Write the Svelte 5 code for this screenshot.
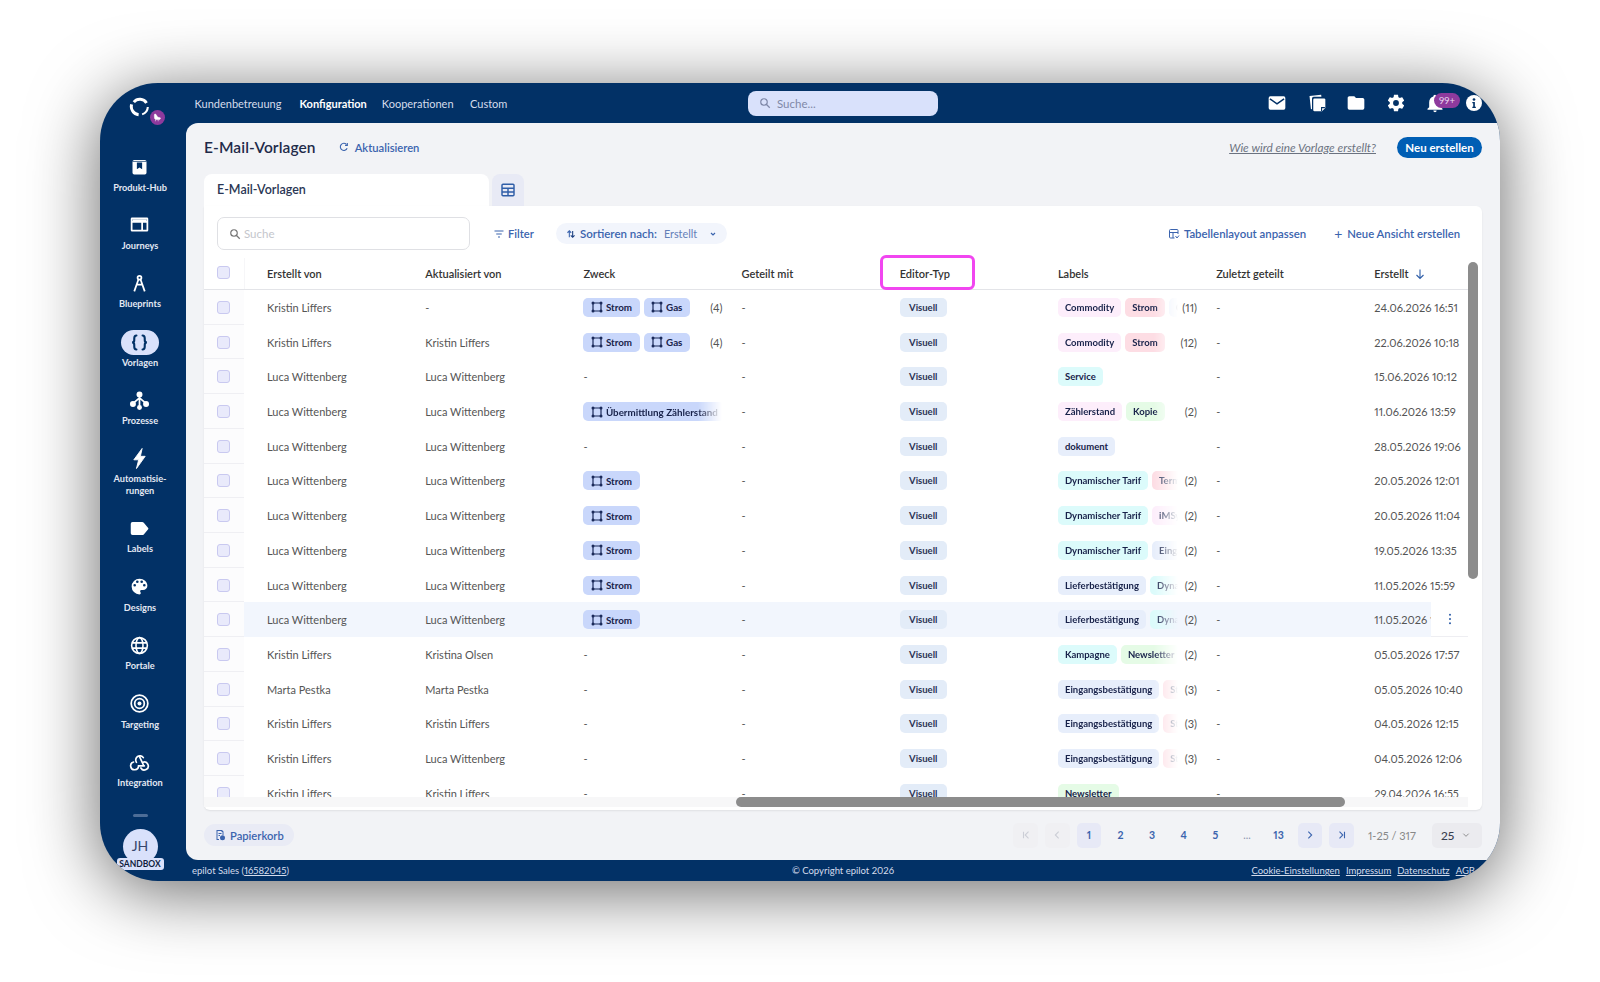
<script>
  const nav = [
    { label: 'Produkt-Hub', icon: 'hub' },
    { label: 'Journeys', icon: 'journeys' },
    { label: 'Blueprints', icon: 'blueprints' },
    { label: 'Vorlagen', icon: 'braces', active: true },
    { label: 'Prozesse', icon: 'flows' },
    { label: 'Automatisie-\nrungen', icon: 'bolt' },
    { label: 'Labels', icon: 'label' },
    { label: 'Designs', icon: 'palette' },
    { label: 'Portale', icon: 'globe' },
    { label: 'Targeting', icon: 'target' },
    { label: 'Integration', icon: 'webhook' },
  ];

  const KL = 'Kristin Liffers';
  const LW = 'Luca Wittenberg';
  const dyn = { t: 'Dynamischer Tarif', c: 'cyan' };
  const lief = { t: 'Lieferbestätigung', c: 'blue' };
  const eing = { t: 'Eingangsbestätigung', c: 'blue' };
  const strom = ['Strom'];

  const rows = [
    { by: KL, up: '-', purpose: ['Strom', 'Gas'], pc: '(4)', labels: [{ t: 'Commodity', c: 'pink' }, { t: 'Strom', c: 'red' }, { t: 'Commodity', c: 'blue' }], lc: '(11)', date: '24.06.2026 16:51' },
    { by: KL, up: KL, purpose: ['Strom', 'Gas'], pc: '(4)', labels: [{ t: 'Commodity', c: 'pink' }, { t: 'Strom', c: 'red' }], lc: '(12)', date: '22.06.2026 10:18' },
    { by: LW, up: LW, labels: [{ t: 'Service', c: 'cyan' }], date: '15.06.2026 10:12' },
    { by: LW, up: LW, purpose: ['Übermittlung Zählerstand'], fade: true, labels: [{ t: 'Zählerstand', c: 'pink' }, { t: 'Kopie', c: 'green' }], lc: '(2)', date: '11.06.2026 13:59' },
    { by: LW, up: LW, labels: [{ t: 'dokument', c: 'blue' }], date: '28.05.2026 19:06' },
    { by: LW, up: LW, purpose: strom, labels: [dyn, { t: 'Termin', c: 'red' }], lc: '(2)', date: '20.05.2026 12:01' },
    { by: LW, up: LW, purpose: strom, labels: [dyn, { t: 'iMSys', c: 'pink' }], lc: '(2)', date: '20.05.2026 11:04' },
    { by: LW, up: LW, purpose: strom, labels: [dyn, { t: 'Eingang', c: 'blue' }], lc: '(2)', date: '19.05.2026 13:35' },
    { by: LW, up: LW, purpose: strom, labels: [lief, { t: 'Dynamisch', c: 'cyan' }], lc: '(2)', date: '11.05.2026 15:59' },
    { by: LW, up: LW, purpose: strom, labels: [lief, { t: 'Dynamisch', c: 'cyan' }], lc: '(2)', date: '11.05.2026 15:59', hover: true },
    { by: KL, up: 'Kristina Olsen', labels: [{ t: 'Kampagne', c: 'cyan' }, { t: 'Newsletter', c: 'green' }], lc: '(2)', date: '05.05.2026 17:57' },
    { by: 'Marta Pestka', up: 'Marta Pestka', labels: [eing, { t: 'Strom', c: 'red' }], lc: '(3)', date: '05.05.2026 10:40' },
    { by: KL, up: KL, labels: [eing, { t: 'Strom', c: 'red' }], lc: '(3)', date: '04.05.2026 12:15' },
    { by: KL, up: LW, labels: [eing, { t: 'Strom', c: 'red' }], lc: '(3)', date: '04.05.2026 12:06' },
    { by: KL, up: KL, labels: [{ t: 'Newsletter', c: 'green' }], date: '29.04.2026 16:55' },
  ];

  const pages = ['1', '2', '3', '4', '5', '...', '13'];
</script>

{#snippet searchIcon()}
  <svg class="i12" viewBox="0 0 24 24" fill="none" stroke="currentColor" stroke-width="2.4"><circle cx="10" cy="10" r="6.5" /><path d="M15 15l6.5 6.5" /></svg>
{/snippet}

{#snippet sideIcon(name)}
  <svg class="side-icon" viewBox="0 0 24 24" fill="#fff">
    {#if name === 'hub'}
      <path d="M6 4.5h12a2 2 0 0 1 2 2V19a2 2 0 0 1-2 2H6a2 2 0 0 1-2-2V6.500a2 2 0 0 1 2-2z" />
      <path d="M9 7.500h6v7.500l-3-2-3 2z" fill="#023166" />
      <path d="M4 6.200h16" stroke="#023166" stroke-width=".8" />
    {:else if name === 'journeys'}
      <path fill-rule="evenodd" d="M3.500 4h17A1.500 1.500 0 0 1 22 5.500v13a1.500 1.500 0 0 1-1.500 1.500h-17A1.500 1.500 0 0 1 2 18.500v-13A1.500 1.500 0 0 1 3.500 4zM4 10v8h10v-8zm12 0v8h4v-8zM4 6v2h16V6z" />
      <path d="M4 6h16v2H4z" />
    {:else if name === 'blueprints'}
      <g fill="none" stroke="#fff" stroke-width="2"><circle cx="12" cy="5.500" r="2.200" /><path d="M10.800 7.500L6 21M13.200 7.500L18 21M8.500 12.500c2 1 5 1 7 0" /></g>
    {:else if name === 'braces'}
      <g fill="none" stroke="#023166" stroke-width="2.400" stroke-linecap="round"><path d="M8.500 4C6 4 6 5.500 6 7.500v2C6 11 5 12 3.500 12 5 12 6 13 6 14.500v2C6 18.500 6 20 8.500 20" /><path d="M15.500 4C18 4 18 5.500 18 7.500v2c0 1.500 1 2.500 2.500 2.500-1.500 0-2.500 1-2.500 2.500v2c0 2 0 3.500-2.500 3.500" /></g>
    {:else if name === 'flows'}
      <circle cx="12" cy="5" r="3.400" /><circle cx="4.500" cy="16" r="3.400" /><circle cx="19.500" cy="16" r="3.400" /><circle cx="12" cy="20" r="2.800" />
      <path d="M12 6v12M12 9L5 15M12 9l7 6" stroke="#fff" stroke-width="2" fill="none" />
    {:else if name === 'bolt'}
      <path d="M15 .5L5.500 13.500H11L8.500 23.500 18.500 9.500H13L15 .5z" stroke="#fff" stroke-linejoin="round" />
    {:else if name === 'label'}
      <path d="M4 4.500h11c.8 0 1.400.3 1.900.9l5 6c.4.4.4 1 0 1.400l-5 6c-.5.6-1.100.7-1.900.7H4a2 2 0 0 1-2-2v-11a2 2 0 0 1 2-2z" />
    {:else if name === 'palette'}
      <path d="M17.500,12A1.500,1.500 0 0,1 16,10.500A1.500,1.500 0 0,1 17.500,9A1.500,1.500 0 0,1 19,10.500A1.500,1.500 0 0,1 17.500,12M14.500,8A1.500,1.500 0 0,1 13,6.500A1.500,1.500 0 0,1 14.500,5A1.500,1.500 0 0,1 16,6.500A1.500,1.500 0 0,1 14.500,8M9.500,8A1.500,1.500 0 0,1 8,6.500A1.500,1.500 0 0,1 9.500,5A1.500,1.500 0 0,1 11,6.500A1.500,1.500 0 0,1 9.500,8M6.500,12A1.500,1.500 0 0,1 5,10.500A1.500,1.500 0 0,1 6.500,9A1.500,1.500 0 0,1 8,10.500A1.500,1.500 0 0,1 6.500,12M12,3A9,9 0 0,0 3,12A9,9 0 0,0 12,21A1.500,1.500 0 0,0 13.500,19.500C13.500,19.110 13.350,18.760 13.110,18.500C12.880,18.230 12.730,17.880 12.730,17.500A1.500,1.500 0 0,1 14.230,16H16A5,5 0 0,0 21,11C21,6.580 16.970,3 12,3Z" />
    {:else if name === 'globe'}
      <g fill="none" stroke="#fff" stroke-width="1.800"><circle cx="12" cy="12" r="9" /><ellipse cx="12" cy="12" rx="4" ry="9" /><path d="M3.500 9h17M3.500 15h17" /></g>
    {:else if name === 'target'}
      <g fill="none" stroke="#fff" stroke-width="2"><circle cx="12" cy="12" r="9.500" /><circle cx="12" cy="12" r="5.500" /></g><circle cx="12" cy="12" r="2.300" />
    {:else if name === 'webhook'}
      <g fill="none" stroke="#fff" stroke-width="1.900" stroke-linecap="round"><path d="M8.500 13A4.600 4.600 0 1 1 16.400 7.600" /><path d="M12 6.500L16.500 16" /><path d="M5.200 12.600A4.500 4.500 0 1 0 10.900 17H17.500" /><path d="M13.600 19.400A4.500 4.500 0 1 0 15.900 12.900" /></g>
    {/if}
  </svg>
{/snippet}

{#snippet purposeIcon()}
  <svg class="purpose-icon" viewBox="0 0 12 12" fill="#1b2a5a"><path d="M2 2h8v8H2z" fill="none" stroke="#1b2a5a" stroke-width="1.200" /><circle cx="2" cy="2" r="1.500" /><circle cx="10" cy="2" r="1.500" /><circle cx="2" cy="10" r="1.500" /><circle cx="10" cy="10" r="1.500" /></svg>
{/snippet}

<div class="page">
  <div class="window">
    <div class="logo">
      <svg class="logo-mark" viewBox="0 0 24 24" fill="none" stroke="#fff" stroke-width="3.400"><path d="M5.500 7A9 9 0 0 1 20 8" /><path d="M21.500 12.500A9.500 9.500 0 0 1 15 21" stroke-width="2.400" /><path d="M11 21.500A9.500 9.500 0 0 1 3 9.500" /></svg>
      <span class="logo-badge">
        <svg viewBox="0 0 16 16" fill="#fff"><path d="M4 3c1.500 0 2.500 1 3 2.500.5 1.500 2 2.500 5 3 .5 0 .5 2-1 2.500H6C4.500 11 3.500 9.500 3.500 7.500 3.500 6 3 4.500 4 3zM5 11.500v2M9 11.500v2" stroke="#fff" stroke-width=".8" /></svg>
      </span>
    </div>

    <header class="topbar">
      <nav class="topnav">
        <span>Kundenbetreuung</span>
        <span class="current">Konfiguration</span>
        <span>Kooperationen</span>
        <span>Custom</span>
      </nav>
      <div class="global-search">{@render searchIcon()}<span>Suche...</span></div>
      <div class="top-icons">
        <svg viewBox="0 0 24 24" class="top-icon mail"><rect x="2" y="4" width="20" height="16" rx="2" fill="#fff" /><path d="M3.500 7l8.500 6 8.500-6" fill="none" stroke="#023166" stroke-width="1.800" /></svg>
        <svg viewBox="0 0 24 24" class="top-icon"><path d="M3 3.500L17 2l.3 2.500H8a2 2 0 0 0-2 2v13l-1.300-.2z" fill="#fff" /><path d="M9 6.500h11.500A1.500 1.500 0 0 1 22 8v10l-4 4H9a1.500 1.500 0 0 1-1.500-1.500V8A1.500 1.500 0 0 1 9 6.500z" fill="#fff" /><path d="M17.500 21.500v-4h4" fill="none" stroke="#023166" stroke-width="1.300" /></svg>
        <svg viewBox="0 0 24 24" class="top-icon" fill="#fff"><path d="M10,4H4C2.890,4 2,4.890 2,6V18A2,2 0 0,0 4,20H20A2,2 0 0,0 22,18V8C22,6.890 21.100,6 20,6H12L10,4Z" /></svg>
        <svg viewBox="0 0 24 24" class="top-icon" fill="#fff"><path d="M12,15.500A3.500,3.500 0 0,1 8.500,12A3.500,3.500 0 0,1 12,8.500A3.500,3.500 0 0,1 15.500,12A3.500,3.500 0 0,1 12,15.500M19.430,12.970C19.470,12.650 19.500,12.330 19.500,12C19.500,11.670 19.470,11.340 19.430,11L21.540,9.370C21.730,9.220 21.780,8.950 21.660,8.730L19.660,5.270C19.540,5.050 19.270,4.960 19.050,5.050L16.560,6.050C16.040,5.660 15.500,5.320 14.870,5.070L14.500,2.420C14.460,2.180 14.250,2 14,2H10C9.750,2 9.540,2.180 9.500,2.420L9.130,5.070C8.500,5.320 7.960,5.660 7.440,6.050L4.950,5.050C4.730,4.960 4.460,5.050 4.340,5.270L2.340,8.730C2.210,8.950 2.270,9.220 2.460,9.370L4.570,11C4.530,11.340 4.500,11.670 4.500,12C4.500,12.330 4.530,12.650 4.570,12.970L2.460,14.630C2.270,14.780 2.210,15.050 2.340,15.270L4.340,18.730C4.460,18.950 4.730,19.030 4.950,18.950L7.440,17.940C7.960,18.340 8.500,18.680 9.130,18.930L9.500,21.580C9.540,21.820 9.750,22 10,22H14C14.250,22 14.460,21.820 14.500,21.580L14.870,18.930C15.500,18.670 16.040,18.340 16.560,17.940L19.050,18.950C19.270,19.030 19.540,18.950 19.660,18.730L21.660,15.270C21.780,15.050 21.730,14.780 21.540,14.630L19.430,12.970Z" /></svg>
        <span class="bell">
          <svg viewBox="0 0 24 24" class="top-icon" fill="#fff"><path d="M21,19V20H3V19L5,17V11C5,7.900 7.030,5.170 10,4.290C10,4.190 10,4.100 10,4A2,2 0 0,1 12,2A2,2 0 0,1 14,4C14,4.100 14,4.190 14,4.290C16.970,5.170 19,7.900 19,11V17L21,19M14,21A2,2 0 0,1 12,23A2,2 0 0,1 10,21" /></svg>
          <span class="bell-count">99+</span>
        </span>
        <svg viewBox="0 0 24 24" class="info"><circle cx="12" cy="12" r="12" fill="#fff" /><circle cx="12" cy="6.800" r="2" fill="#023166" /><path d="M9.500 10.500h3.800v7h1.500v2H9.500v-2h1.300v-5H9.500z" fill="#023166" /></svg>
      </div>
    </header>

    <aside class="sidebar">
      <div class="side-items">
        {#each nav as item}
          <div class="side-item">
            <span class="side-glyph" class:active={item.active}>{@render sideIcon(item.icon)}</span>
            <span class="side-label">{item.label}</span>
          </div>
        {/each}
      </div>
      <div class="side-foot">
        <span class="side-rule"></span>
        <div class="avatar">JH<span class="sandbox">SANDBOX</span></div>
      </div>
    </aside>

    <main class="main">
      <div class="page-head">
        <h1>E-Mail-Vorlagen</h1>
        <span class="link refresh">
          <svg class="i10" viewBox="0 0 24 24" fill="none" stroke="currentColor" stroke-width="2.600"><path d="M19.500 15a8.500 8.500 0 1 1-1.500-9" /><path d="M20 2.500V8h-5.500" /></svg>
          Aktualisieren
        </span>
        <a class="help" href="#help">Wie wird eine Vorlage erstellt?</a>
        <button class="primary">Neu erstellen</button>
      </div>

      <div class="tabs">
        <div class="tab">E-Mail-Vorlagen</div>
        <div class="tab-grid">
          <svg viewBox="0 0 24 24" fill="none" stroke="#2f5ea8" stroke-width="2.200"><rect x="3" y="3.500" width="18" height="17" rx="1.500" /><path d="M3 9.500h18M3 15h18M12 9.500v11" /></svg>
        </div>
      </div>

      <section class="card">
        <div class="toolbar">
          <div class="search">{@render searchIcon()}<span>Suche</span></div>
          <span class="link filter">
            <svg class="i12" viewBox="0 0 24 24" fill="none" stroke="currentColor" stroke-width="2.200"><path d="M3 6h18M6.500 12h11M10 18h4" /></svg>
            Filter
          </span>
          <div class="sort">
            <svg class="i10" viewBox="0 0 24 24" fill="none" stroke="currentColor" stroke-width="2.600"><path d="M8 20V5M3.500 9L8 4.500 12.500 9" /><path d="M16 5v15M11.500 15.500L16 20l4.500-4.500" stroke="#1b3f80" /></svg>
            <span class="sort-key">Sortieren nach:</span>
            <span class="sort-value">Erstellt</span>
            <svg class="i8" viewBox="0 0 12 12" fill="none" stroke="currentColor" stroke-width="1.800"><path d="M3 4.500L6 7.500l3-3" /></svg>
          </div>
          <span class="link layout">
            <svg class="i12" viewBox="0 0 24 24" fill="none" stroke="currentColor" stroke-width="2"><path d="M13 20H5a2 2 0 0 1-2-2V5a2 2 0 0 1 2-2h13a2 2 0 0 1 2 2v7M3 9h17M10 9v11" /><path d="M15 16l3 4 4-5" /></svg>
            Tabellenlayout anpassen
          </span>
          <span class="link new-view"><span class="plus">+</span> Neue Ansicht erstellen</span>
        </div>

        <div class="table">
          <div class="grid head">
            <div class="check"><span class="box"></span></div>
            <div class="cell first">Erstellt von</div>
            <div class="cell">Aktualisiert von</div>
            <div class="cell">Zweck</div>
            <div class="cell">Geteilt mit</div>
            <div class="cell editor">Editor-Typ<span class="highlight"></span></div>
            <div class="cell">Labels</div>
            <div class="cell">Zuletzt geteilt</div>
            <div class="cell">
              Erstellt
              <svg class="i12" viewBox="0 0 24 24" fill="none" stroke="#2f5ea8" stroke-width="2.200"><path d="M12 3v18M5 14l7 7 7-7" /></svg>
            </div>
          </div>

          <div class="body">
            {#each rows as row}
              <div class="grid row" class:hover={row.hover}>
                <div class="check"><span class="box"></span></div>
                <div class="cell first">{row.by}</div>
                <div class="cell">{row.up}</div>
                <div class="cell tags-cell">
                  {#if row.purpose}
                    <div class="tags" class:fade={row.fade}>
                      {#each row.purpose as p}
                        <span class="tag purpose">{@render purposeIcon()}{p}</span>
                      {/each}
                    </div>
                    {#if row.pc}<span class="count">{row.pc}</span>{/if}
                  {:else}-{/if}
                </div>
                <div class="cell">-</div>
                <div class="cell"><span class="tag editor-tag">Visuell</span></div>
                <div class="cell tags-cell">
                  <div class="tags" class:fade={row.lc}>
                    {#each row.labels as l}
                      <span class="tag {l.c}">{l.t}</span>
                    {/each}
                  </div>
                  {#if row.lc}<span class="count">{row.lc}</span>{/if}
                </div>
                <div class="cell">-</div>
                <div class="cell">{row.date}</div>
                {#if row.hover}
                  <div class="actions"><svg viewBox="0 0 4 14" fill="#2f5ea8"><circle cx="2" cy="2" r="1.200" /><circle cx="2" cy="7" r="1.200" /><circle cx="2" cy="12" r="1.200" /></svg></div>
                {/if}
              </div>
            {/each}
          </div>

          <div class="hbar"><span class="hthumb"></span></div>
          <span class="vthumb"></span>
        </div>
      </section>

      <div class="pager-row">
        <span class="trash">
          <svg class="i12" viewBox="0 0 24 24" fill="#3b64ae"><path d="M5 2h11l3 3v7h-2V6h-2V4H7v16h3v2H5z" /><path d="M9 8h6v2H9zM9 12h3v2H9z" /><circle cx="17" cy="17.500" r="5" /></svg>
          Papierkorb
        </span>
        <div class="pager">
          <span class="pg off"><svg class="i10" viewBox="0 0 12 12" fill="none" stroke="currentColor" stroke-width="1.300"><path d="M3 2v8M9 2L5 6l4 4" /></svg></span>
          <span class="pg off"><svg class="i10" viewBox="0 0 12 12" fill="none" stroke="currentColor" stroke-width="1.300"><path d="M8 2L4 6l4 4" /></svg></span>
          {#each pages as p, i}
            <span class="pg" class:cur={i === 0} class:dots={p === '...'}>{p}</span>
          {/each}
          <span class="pg cur"><svg class="i10" viewBox="0 0 12 12" fill="none" stroke="currentColor" stroke-width="1.300"><path d="M4 2l4 4-4 4" /></svg></span>
          <span class="pg cur"><svg class="i10" viewBox="0 0 12 12" fill="none" stroke="currentColor" stroke-width="1.300"><path d="M3 2l4 4-4 4M9 2v8" /></svg></span>
          <span class="range">1-25 / 317</span>
          <span class="size">25 <svg class="i8" viewBox="0 0 12 12" fill="none" stroke="#777" stroke-width="1.200"><path d="M2 4l4 4 4-4" /></svg></span>
        </div>
      </div>
    </main>

    <footer class="foot">
      <span class="account">epilot Sales (<u>16582045</u>)</span>
      <span>© Copyright epilot 2026</span>
      <span class="foot-links"><u>Cookie-Einstellungen</u><u>Impressum</u><u>Datenschutz</u><u>AGB</u></span>
    </footer>
  </div>
</div>

<style>
  :global(body) {
    margin: 0;
    background: #fff;
    font-family: "Lato", "Open Sans", sans-serif;
    font-variant-numeric: proportional-nums;
  }

  .page {
    width: 1600px;
    height: 982px;
    padding: 83px 100px 101px;
    box-sizing: border-box;
    overflow: hidden;
    background: #fff;
  }

  .window {
    height: 798px;
    display: grid;
    grid-template-columns: 86px 1fr;
    grid-template-rows: 40px 737px 21px;
    grid-template-areas:
      "logo top"
      "side main"
      "side foot";
    background: #023166;
    border-radius: 58px;
    box-shadow: 0 10px 70px rgba(0, 0, 0, 0.6);
    overflow: hidden;
  }

  svg {
    display: block;
    flex: none;
  }

  .i8 { width: 8px; height: 8px; }
  .i10 { width: 10px; height: 10px; }
  .i12 { width: 12px; height: 12px; }

  /* top bar */
  .logo {
    grid-area: logo;
    position: relative;
  }

  .logo-mark {
    position: absolute;
    left: 29px;
    top: 13px;
    width: 21px;
    height: 21px;
  }

  .logo-badge {
    position: absolute;
    left: 50px;
    top: 27px;
    width: 15px;
    height: 15px;
    padding: 2px;
    box-sizing: border-box;
    border-radius: 50%;
    background: #8e3a9d;
  }

  .topbar {
    grid-area: top;
    display: flex;
    align-items: center;
    padding-left: 8.500px;
    color: #d5dcec;
    font-size: 11px;
  }

  .topnav {
    display: flex;
    gap: 16.500px;
    width: 553.500px;
  }

  .current {
    margin: 0 -1.500px 0 1.500px;
    color: #fff;
    font-weight: 700;
  }

  .global-search {
    display: flex;
    align-items: center;
    gap: 6px;
    width: 190px;
    height: 25px;
    padding-left: 11px;
    box-sizing: border-box;
    border-radius: 8px;
    background: #d9e1fb;
    color: #7f88a8;
    font-size: 11.5px;
  }

  .top-icons {
    display: flex;
    align-items: center;
    margin-left: auto;
    margin-right: 18px;
    gap: 19.500px;
  }

  .top-icon {
    width: 20px;
    height: 20px;
  }

  .info {
    width: 16px;
    height: 16px;
    margin-left: 1.500px;
  }

  .bell {
    position: relative;
    display: block;
  }

  .bell-count {
    position: absolute;
    left: 9px;
    top: 0;
    width: 26px;
    height: 15px;
    border-radius: 8px;
    background: #8e3a9d;
    color: #e8d5ee;
    font-size: 9.500px;
    line-height: 15px;
    text-align: center;
  }

  /* sidebar */
  .sidebar {
    grid-area: side;
    display: flex;
    flex-direction: column;
    align-items: center;
    padding-right: 6px;
  }

  .side-items {
    display: flex;
    flex-direction: column;
    gap: 19.900px;
    padding-top: 31.500px;
  }

  .side-item {
    display: flex;
    flex-direction: column;
    align-items: center;
    gap: 3px;
  }

  .side-glyph {
    display: flex;
    align-items: center;
    justify-content: center;
    height: 24px;
    width: 38px;
    border-radius: 13px;
  }

  .side-glyph.active {
    height: 25px;
    margin-bottom: -1px;
    background: #d9e1fb;
  }

  .side-icon {
    width: 21px;
    height: 21px;
  }

  .side-label {
    color: #e3e8f3;
    font-size: 9.200px;
    font-weight: 700;
    line-height: 11.500px;
    text-align: center;
    white-space: pre-line;
  }

  .side-foot {
    margin-top: auto;
    display: flex;
    flex-direction: column;
    align-items: center;
    padding-bottom: 17px;
  }

  .side-rule {
    width: 15px;
    height: 3px;
    margin-bottom: 12px;
    border-radius: 2px;
    background: #4d6d97;
  }

  .avatar {
    position: relative;
    width: 35px;
    height: 35px;
    border-radius: 50%;
    background: #d9e1fb;
    color: #37466b;
    font-size: 14px;
    line-height: 33px;
    text-align: center;
  }

  .sandbox {
    position: absolute;
    left: -6px;
    top: 29px;
    width: 47px;
    height: 12px;
    border-radius: 3px;
    background: #d9e1fb;
    color: #101c3c;
    font-size: 8.500px;
    font-weight: 700;
    line-height: 12px;
  }

  /* main column */
  .main {
    grid-area: main;
    display: flex;
    flex-direction: column;
    padding: 0 18px;
    background: #f2f3f6;
    border-radius: 12px 0 0 12px;
    color: #444;
  }

  .page-head {
    display: flex;
    align-items: center;
    height: 51px;
    flex: none;
    box-sizing: border-box;
    padding-bottom: 3px;
  }

  h1 {
    margin: 0 23px 0 0;
    color: #1f2b4a;
    font-size: 15.500px;
    font-weight: 600;
    letter-spacing: 0.1px;
  }

  .link {
    display: inline-flex;
    align-items: center;
    gap: 4px;
    color: #3b64ae;
    font-size: 11.200px;
    font-weight: 600;
    white-space: nowrap;
  }

  .refresh {
    gap: 6px;
  }

  .help {
    margin-left: auto;
    margin-right: 21px;
    color: #6b7280;
    font-size: 11.800px;
    font-style: italic;
  }

  .primary {
    width: 85px;
    height: 21px;
    padding: 0;
    border: 0;
    border-radius: 11px;
    background: #005eb4;
    color: #fff;
    font: 700 11.500px "Lato", sans-serif;
  }

  .tabs {
    display: flex;
    gap: 3px;
    height: 32px;
    flex: none;
  }

  .tab {
    width: 285px;
    padding-left: 13px;
    box-sizing: border-box;
    border-radius: 8px 8px 0 0;
    background: #fff;
    color: #2a3654;
    font-size: 12.500px;
    font-weight: 600;
    line-height: 31px;
  }

  .tab-grid {
    display: flex;
    align-items: center;
    justify-content: center;
    width: 32px;
    border-radius: 8px 8px 0 0;
    background: #e8eaf5;
  }

  .tab-grid svg {
    width: 16px;
    height: 16px;
  }

  .card {
    display: flex;
    flex-direction: column;
    height: 604px;
    flex: none;
    background: #fff;
    border-radius: 0 6px 6px 6px;
    box-shadow: 0 1px 2px rgba(0, 0, 0, 0.08);
  }

  .toolbar {
    display: flex;
    align-items: center;
    height: 44px;
    padding: 11px 22px 0 13px;
    box-sizing: border-box;
    flex: none;
  }

  .search {
    display: flex;
    align-items: center;
    gap: 3px;
    width: 253px;
    height: 33px;
    padding-left: 11px;
    box-sizing: border-box;
    border: 1px solid #dfe0e4;
    border-radius: 7px;
    color: #777;
  }

  .search span {
    color: #c4c6cc;
    font-size: 11.500px;
  }

  .filter {
    margin-left: 23px;
    gap: 3px;
  }

  .sort {
    display: flex;
    align-items: center;
    width: 171px;
    height: 21px;
    margin-left: 22px;
    padding-left: 10px;
    box-sizing: border-box;
    border-radius: 11px;
    background: #f2f5fc;
    color: #3b64ae;
    font-size: 11.500px;
    font-weight: 600;
  }

  .sort-key { margin-left: 4px; }
  .sort-value { margin-left: 7px; color: #6480b8; font-size: 10.800px; font-weight: 400; }
  .sort-value + svg { margin-left: 12px; }

  .layout {
    margin-left: auto;
    font-size: 11.400px;
  }

  .new-view {
    margin-left: 28px;
    gap: 5px;
    font-size: 11.300px;
  }

  .plus {
    font-size: 14px;
    line-height: 10px;
    font-weight: 400;
  }

  /* table */
  .table {
    position: relative;
    display: flex;
    flex-direction: column;
    min-height: 0;
    flex: 1;
    font-size: 11px;
    color: #555;
  }

  .grid {
    display: grid;
    grid-template-columns: 40px 165.200px repeat(6, 158.200px) 1fr;
    width: 1264px;
    box-sizing: border-box;
  }

  .head {
    height: 40px;
    padding-top: 8px;
    flex: none;
    border-bottom: 1.500px solid #e3e4e8;
    color: #333;
    font-weight: 600;
  }

  .head .check {
    border-bottom: 0;
    background: none;
    box-shadow: 1px 0 0 #f6f6f8;
    padding-bottom: 3px;
  }

  .body {
    height: 507px;
    flex: none;
    overflow: hidden;
  }

  .row {
    position: relative;
    height: 34.720px;
  }

  .check {
    display: flex;
    align-items: center;
    justify-content: center;
    padding: 1px 4px 0 2px;
    background: #fcfcfd;
    border-bottom: 1.500px solid #efeff3;
    box-sizing: border-box;
  }

  .box {
    width: 13px;
    height: 13px;
    box-sizing: border-box;
    border: 1px solid #c9c9f0;
    border-radius: 3px;
    background: #e9eafb;
  }

  .cell {
    display: flex;
    align-items: center;
    padding-left: 16px;
    min-width: 0;
    white-space: nowrap;
    gap: 5px;
  }

  .cell.first {
    padding-left: 23px;
  }

  .hover .cell {
    background: #f2f6fd;
  }

  .editor {
    position: relative;
  }

  .highlight {
    position: absolute;
    left: -4px;
    top: -3px;
    width: 95px;
    height: 35px;
    box-sizing: border-box;
    border: 3.500px solid #f146f0;
    border-radius: 6px;
  }

  .tags-cell {
    gap: 0;
    padding-right: 3.200px;
  }

  .tags {
    display: flex;
    gap: 4px;
    width: 120px;
    flex: none;
    overflow: hidden;
  }

  .tags.fade {
    -webkit-mask-image: linear-gradient(90deg, #000 calc(100% - 24px), transparent);
    mask-image: linear-gradient(90deg, #000 calc(100% - 24px), transparent);
  }

  .tags.fade:has(.purpose) {
    width: 139px;
  }

  .tag {
    display: inline-flex;
    align-items: center;
    flex: none;
    height: 19px;
    padding: 0 7px;
    border-radius: 5px;
    color: #18224a;
    font-size: 9.500px;
    font-weight: 700;
  }

  .purpose {
    gap: 3px;
    padding: 0 7.500px;
    background: #c9d7fb;
    font-size: 9.800px;
  }

  .purpose-icon {
    width: 12px;
    height: 12px;
  }

  .editor-tag {
    width: 47px;
    padding: 0;
    justify-content: center;
    background: #e3ecf8;
    color: #2b3354;
  }

  .pink { background: #fdeefb; }
  .red { background: #fddde4; }
  .cyan { background: #dcfbfb; }
  .blue { background: #e7eefb; }
  .green { background: #e5fbe6; }

  .count {
    margin-left: auto;
    color: #555;
  }

  .actions {
    position: absolute;
    right: 0;
    top: 0;
    width: 37px;
    height: 100%;
    display: flex;
    align-items: center;
    justify-content: center;
    background: #fff;
    border-bottom: 1px solid #eeeef2;
    box-sizing: border-box;
  }

  .actions svg {
    width: 4px;
    height: 12px;
  }

  .hbar {
    position: relative;
    height: 10px;
    width: 1264px;
    flex: none;
    background: #f7f7f8;
  }

  .hthumb {
    position: absolute;
    left: 532px;
    top: 0;
    width: 609px;
    height: 10px;
    border-radius: 5px;
    background: #8c8c8c;
  }

  .vthumb {
    position: absolute;
    right: 4px;
    top: 12px;
    width: 10px;
    height: 317px;
    border-radius: 5px;
    background: #8c8c8c;
  }

  /* pagination */
  .pager-row {
    display: flex;
    align-items: center;
    flex: 1;
  }

  .trash {
    display: inline-flex;
    align-items: center;
    gap: 4px;
    height: 22px;
    padding: 0 10px;
    border-radius: 11px;
    background: #e9ebf5;
    color: #3b64ae;
    font-size: 11.200px;
    font-weight: 600;
  }

  .pager {
    display: flex;
    align-items: center;
    gap: 7px;
    margin-left: auto;
    color: #3b64ae;
    font-size: 10.500px;
    font-weight: 700;
  }

  .pg {
    display: flex;
    align-items: center;
    justify-content: center;
    width: 24.600px;
    height: 25px;
    border-radius: 5px;
  }

  .pg.off {
    background: #f0f0f3;
    color: #ccced6;
  }

  .pg.cur {
    background: #e7e9f6;
  }

  .pg.dots {
    color: #8a93ad;
    font-weight: 400;
  }

  .range {
    width: 50px;
    margin-left: 7px;
    color: #888;
    font-size: 11px;
    font-weight: 400;
    white-space: nowrap;
  }

  .size {
    display: flex;
    align-items: center;
    gap: 8px;
    width: 50px;
    height: 25px;
    margin-left: 7px;
    padding-left: 9px;
    box-sizing: border-box;
    border-radius: 5px;
    background: #ebebef;
    color: #3a3f50;
    font-size: 12px;
    font-weight: 500;
  }

  /* footer */
  .foot {
    grid-area: foot;
    display: grid;
    grid-template-columns: 1fr auto 1fr;
    align-items: center;
    padding: 0 25px;
    color: #d5dcec;
    font-size: 9.500px;
  }

  .account {
    margin-left: -19px;
  }

  .foot-links {
    display: flex;
    justify-content: flex-end;
    gap: 6px;
  }
</style>
